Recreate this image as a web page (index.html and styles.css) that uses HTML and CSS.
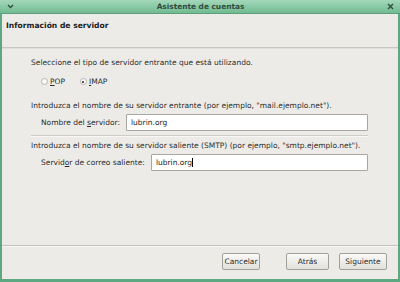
FILE: index.html
```html
<!DOCTYPE html>
<html lang="es">
<head>
<meta charset="utf-8">
<link rel="stylesheet" href="styles.css">
</head>
<body>
<div class="window">
  <div class="titlebar">
    <svg class="tb-menu" width="7" height="5" viewBox="0 0 7 5"><path d="M1 1 L3.5 3.5 L6 1" fill="none" stroke="#2f4d3c" stroke-width="1.3"/></svg>
    <span class="tb-title">Asistente de cuentas</span>
    <svg class="tb-close" width="7" height="7" viewBox="0 0 7 7"><path d="M1 1 L6 6 M6 1 L1 6" fill="none" stroke="#2f4d3c" stroke-width="1.4"/></svg>
  </div>
  <div class="header">Información de servidor</div>
  <div class="body">
    <div class="content">
      <p class="line first">Seleccione el tipo de servidor entrante que está utilizando.</p>
      <div class="radios">
        <label class="radio"><span class="dot"></span><span><u>P</u>OP</span></label>
        <label class="radio"><span class="dot on"></span><span><u>I</u>MAP</span></label>
      </div>
      <p class="line">Introduzca el nombre de su servidor entrante (por ejemplo, "mail.ejemplo.net").</p>
      <div class="field">
        <span class="lbl">Nombre del <u>s</u>ervidor:</span>
        <span class="input">lubrin.org</span>
      </div>
      <div class="sep"></div>
      <p class="line">Introduzca el nombre de su servidor saliente (SMTP) (por ejemplo, "smtp.ejemplo.net").</p>
      <div class="field">
        <span class="lbl">Servid<u>o</u>r de correo saliente:</span>
        <span class="input">lubrin.org<span class="caret"></span></span>
      </div>
    </div>
    <div class="footer">
      <button class="btn cancel">Cancelar</button>
      <button class="btn back">Atrás</button>
      <button class="btn next">Siguiente</button>
    </div>
  </div>
</div>
</body>
</html>
```
FILE: styles.css
```css
html, body {
  margin: 0;
  padding: 0;
}
body {
  width: 400px;
  height: 282px;
  overflow: hidden;
  font-family: "DejaVu Sans", sans-serif;
  font-size: 7.5px;
  color: #2b2b2b;
  background: #edebe7;
}
.window {
  box-sizing: border-box;
  width: 400px;
  height: 282px;
  display: flex;
  flex-direction: column;
  border-left: 2px solid #5ea881;
  border-right: 2px solid #5ea881;
  border-bottom: 3px solid #5ea881;
  background: #edebe7;
}
.titlebar {
  height: 13px;
  flex: none;
  margin: 0 -2px;
  padding: 0 6px 0 7px;
  display: flex;
  align-items: center;
  justify-content: space-between;
  background: linear-gradient(#a3d8ba, #72ba92);
  border-bottom: 1px solid #5b9f7b;
}
.tb-title {
  font-weight: bold;
  font-size: 7.4px;
  color: #2f4d3c;
}
.header {
  flex: none;
  height: 34px;
  box-sizing: border-box;
  padding: 7px 0 0 4px;
  line-height: 9px;
  font-weight: bold;
  font-size: 7.6px;
  color: #222;
  border-bottom: 1px solid #c9c6c0;
  box-shadow: 0 1px 0 #e2dfda;
}
.body {
  flex: 1;
  display: flex;
  flex-direction: column;
  justify-content: space-between;
}
.content {
  padding: 10px 30px 0 29px;
}
.line {
  margin: 0;
  line-height: 9px;
  white-space: nowrap;
}
.radios {
  display: flex;
  gap: 15px;
  margin: 10px 0 15px 10px;
  height: 9px;
  align-items: center;
}
.radio {
  display: flex;
  align-items: center;
  gap: 2px;
}
.dot {
  box-sizing: border-box;
  width: 7px;
  height: 7px;
  border-radius: 50%;
  border: 1px solid #b8b5ae;
  background: #fbfaf8;
  position: relative;
}
.dot.on::after {
  content: "";
  position: absolute;
  left: 1.5px;
  top: 1.5px;
  width: 2px;
  height: 2px;
  border-radius: 50%;
  background: #222;
}
.field {
  display: flex;
  align-items: center;
  gap: 6px;
  margin: 3.5px 0 0 10px;
}
.input {
  flex: 1;
  box-sizing: border-box;
  height: 17px;
  display: flex;
  align-items: center;
  padding-left: 4px;
  background: #fff;
  border: 1px solid #a9a6a0;
  border-radius: 1px;
  color: #222;
}
.caret {
  display: inline-block;
  width: 1px;
  height: 9px;
  background: #000;
}
.sep {
  height: 1px;
  background: #cfccc6;
  margin: 4px 0 5.5px 0;
  box-shadow: 0 1px 0 #f8f7f5;
}
.footer {
  border-top: 1px solid #c6c3bd;
  box-shadow: inset 0 1px 0 #f8f7f5;
  height: 34px;
  box-sizing: border-box;
  display: flex;
  justify-content: flex-end;
  align-items: center;
  padding: 0 11px 2px 0;
}
.btn {
  box-sizing: border-box;
  height: 17px;
  padding: 0;
  font-family: "DejaVu Sans", sans-serif;
  font-size: 7.5px;
  color: #2b2b2b;
  background: linear-gradient(#faf9f7, #e4e1dc);
  border: 1px solid #a3a09a;
  border-radius: 2px;
}
.cancel {
  width: 38px;
}
.back {
  width: 43px;
  margin-left: 26px;
}
.next {
  width: 48px;
  margin-left: 10px;
}
```
